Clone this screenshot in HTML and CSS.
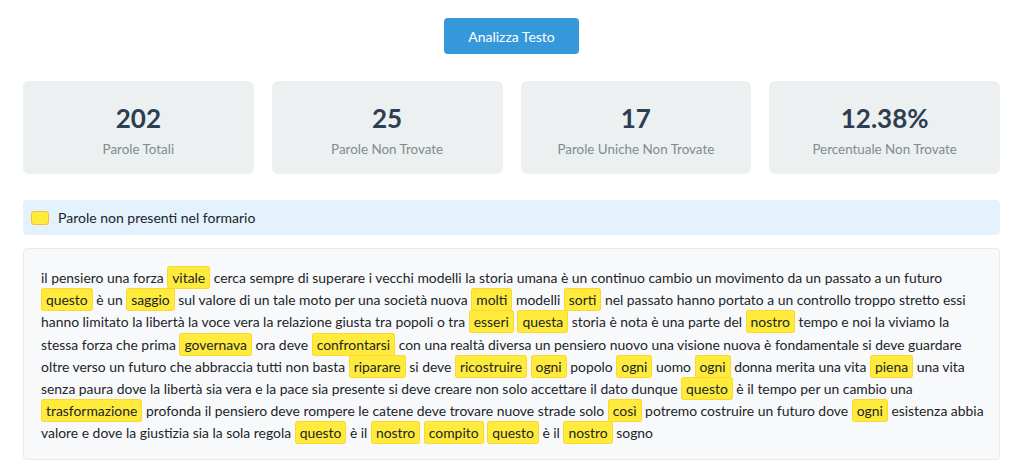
FILE: index.html
```html
<!DOCTYPE html>
<html lang="it">
<head>
    <meta charset="UTF-8">
    <meta name="viewport" content="width=device-width, initial-scale=1.0">
    <title>Analisi Formario</title>
    <link rel="stylesheet" href="styles.css">
</head>
<body>
    <div class="container">
        <div class="actions">
            <button class="analyze">Analizza Testo</button>
        </div>

        <div class="stats">
            <div class="stat-card">
                <div class="stat-number">202</div>
                <div class="stat-label">Parole Totali</div>
            </div>
            <div class="stat-card">
                <div class="stat-number">25</div>
                <div class="stat-label">Parole Non Trovate</div>
            </div>
            <div class="stat-card">
                <div class="stat-number">17</div>
                <div class="stat-label">Parole Uniche Non Trovate</div>
            </div>
            <div class="stat-card">
                <div class="stat-number">12.38%</div>
                <div class="stat-label">Percentuale Non Trovate</div>
            </div>
        </div>

        <div class="legend">
            <span class="legend-swatch"></span>
            <span>Parole non presenti nel formario</span>
        </div>

        <div class="result">
            il pensiero una forza <span class="miss">vitale</span> cerca sempre di superare i vecchi modelli la storia umana è un continuo cambio un movimento da un passato a un futuro
            <span class="miss">questo</span> è un <span class="miss">saggio</span> sul valore di un tale moto per una società nuova <span class="miss">molti</span> modelli <span class="miss">sorti</span> nel passato hanno portato a un controllo troppo stretto essi
            hanno limitato la libertà la voce vera la relazione giusta tra popoli o tra <span class="miss">esseri</span> <span class="miss">questa</span> storia è nota è una parte del <span class="miss">nostro</span> tempo e noi la viviamo la
            stessa forza che prima <span class="miss">governava</span> ora deve <span class="miss">confrontarsi</span> con una realtà diversa un pensiero nuovo una visione nuova è fondamentale si deve guardare
            oltre verso un futuro che abbraccia tutti non basta <span class="miss">riparare</span> si deve <span class="miss">ricostruire</span> <span class="miss">ogni</span> popolo <span class="miss">ogni</span> uomo <span class="miss">ogni</span> donna merita una vita <span class="miss">piena</span> una vita
            senza paura dove la libertà sia vera e la pace sia presente si deve creare non solo accettare il dato dunque <span class="miss">questo</span> è il tempo per un cambio una
            <span class="miss">trasformazione</span> profonda il pensiero deve rompere le catene deve trovare nuove strade solo <span class="miss">così</span> potremo costruire un futuro dove <span class="miss">ogni</span> esistenza abbia
            valore e dove la giustizia sia la sola regola <span class="miss">questo</span> è il <span class="miss">nostro</span> <span class="miss">compito</span> <span class="miss">questo</span> è il <span class="miss">nostro</span> sogno
        </div>
    </div>
</body>
</html>
```

FILE: styles.css
```css
body {
    margin: 0;
    background: #ffffff;
    font-family: 'Segoe UI', Lato, sans-serif;
    color: #212529;
}
.container {
    width: 977px;
    margin: 0 auto;
}
.actions {
    display: flex;
    justify-content: center;
    padding-top: 18px;
}
.analyze {
    width: 135px;
    height: 36px;
    border: none;
    border-radius: 4px;
    background: #3498db;
    color: white;
    font-family: inherit;
    font-size: 14px;
    cursor: pointer;
}
.stats {
    display: grid;
    grid-template-columns: repeat(4, 1fr);
    gap: 18px;
    margin-top: 27px;
}
.stat-card {
    height: 93px;
    padding-top: 3px;
    box-sizing: border-box;
    background: #ecf0f1;
    border-radius: 6px;
    display: flex;
    flex-direction: column;
    justify-content: center;
    align-items: center;
}
.stat-number {
    font-size: 26px;
    font-weight: bold;
    color: #2c3e50;
    line-height: 32px;
}
.stat-label {
    font-size: 13.4px;
    color: #7f8c8d;
    margin-top: 7px;
}
.legend {
    display: flex;
    align-items: center;
    gap: 9px;
    height: 35px;
    margin-top: 26px;
    padding: 0 8px;
    background: #e3f2fd;
    border-radius: 4px;
    font-size: 14px;
}
.legend-swatch {
    width: 16px;
    height: 12px;
    background: #ffeb3b;
    border: 1px solid #fbc02d;
    border-radius: 3px;
}
.result {
    margin-top: 13px;
    padding: 18px 12px 14px 17px;
    background: #f8f9fa;
    border: 1px solid #e9ecef;
    border-radius: 4px;
    font-size: 13.9px;
    line-height: 22.2px;
}
.miss {
    background: #ffeb3b;
    border: 1px solid #fdd835;
    border-radius: 3px;
    padding: 2px 4px;
}
```
